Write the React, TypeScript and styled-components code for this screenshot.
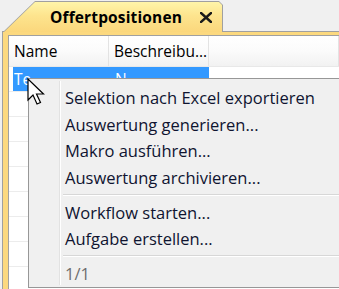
import React from "react";
import styled, { createGlobalStyle } from "styled-components";

const Global = createGlobalStyle`
  html, body { margin: 0; padding: 0; background: #f0f0f0; }
  body { font-family: "Open Sans", "Noto Sans", sans-serif; }
`;

const Screen = styled.div`
  position: relative;
  width: 339px;
  height: 289px;
  overflow: hidden;
  background: #f0f0f0;
  padding-left: 2px;
  box-sizing: border-box;
`;

const TabStrip = styled.div`
  height: 32px;
  display: flex;
  align-items: flex-end;
  padding-left: 1px;
  position: relative;
  z-index: 1;
  margin-bottom: -1px;
`;

const Tab = styled.div`
  width: 220px;
  height: 31px;
  background: #a0a0a0;
  padding: 1px 1px 0 1px;
  box-sizing: border-box;
  clip-path: polygon(0 100%, 32px 0, calc(100% - 4px) 0, 100% 4px, 100% 100%);
  display: flex;
`;

const TabFace = styled.div`
  flex: 1;
  background: linear-gradient(#fff5a9, #fde48e 45%, #fbd77c);
  clip-path: polygon(0 100%, 31px 0, calc(100% - 3px) 0, 100% 3px, 100% 100%);
  display: flex;
  align-items: center;
  padding-left: 46px;
  gap: 18px;
`;

const TabTitle = styled.span`
  font-weight: 700;
  font-size: 15.5px;
  color: #000;
  letter-spacing: 0.15px;
`;

const Panel = styled.div`
  border-top: 1px solid #a0a0a0;
  border-left: 1px solid #a0a0a0;
  background: #fcd97f;
  padding: 3px 0 0 5px;
  height: 260px;
  box-sizing: border-box;
`;

const Grid = styled.div`
  background: #fff;
  border-top: 1px solid #a0a0a0;
  border-left: 1px solid #a0a0a0;
  height: 100%;
  font-size: 15.5px;
  color: #000;
`;

const HeaderRow = styled.div`
  display: flex;
  height: 30px;
  background: linear-gradient(#ffffff, #fbfbfb 50%, #f2f2f2);
  border-bottom: 1px solid #e8e8e8;
`;

const HeaderCell = styled.div<{ $w?: number }>`
  width: ${(p) => (p.$w ? `${p.$w}px` : "auto")};
  flex: ${(p) => (p.$w ? "none" : "1")};
  box-sizing: border-box;
  border-right: 1px solid #e3e3e3;
  padding-left: 5px;
  display: flex;
  align-items: center;
  white-space: nowrap;
`;

const Row = styled.div`
  display: flex;
  height: 25px;
  border-bottom: 1px solid #ececec;
  box-sizing: border-box;
  padding-left: 4px;
`;

const Cell = styled.div<{ $w: number; $selected?: boolean; $pad?: number }>`
  width: ${(p) => p.$w}px;
  background: ${(p) => (p.$selected ? "#3399ff" : "transparent")};
  color: ${(p) => (p.$selected ? "#fff" : "#000")};
  display: flex;
  align-items: flex-start;
  padding-top: 1px;
  padding-left: ${(p) => p.$pad ?? 1}px;
  box-sizing: border-box;
`;

const Menu = styled.div`
  position: absolute;
  left: 28px;
  top: 78px;
  width: 330px;
  height: 210px;
  box-sizing: border-box;
  background: #f0f0f0;
  border: 1px solid #979797;
  padding: 5px 2px 0 2px;
  display: flex;
  flex-direction: column;
  font-size: 16.5px;
  color: #0f1430;
  &::before {
    content: "";
    position: absolute;
    left: 30px;
    top: 2px;
    bottom: 2px;
    width: 1px;
    background: #e2e2e2;
    border-right: 1px solid #fff;
  }
`;

const MenuItem = styled.div<{ $disabled?: boolean }>`
  height: 26.7px;
  display: flex;
  align-items: center;
  padding-left: 34px;
  white-space: nowrap;
  color: ${(p) => (p.$disabled ? "#6d6d6d" : "inherit")};
`;

const Separator = styled.div`
  height: 1px;
  margin: 3px 0 3px 32px;
  background: #d7d7d7;
  border-bottom: 1px solid #fff;
`;

const Cursor = styled.svg`
  position: absolute;
  left: 27px;
  top: 78px;
`;

function CloseIcon() {
  return (
    <svg width="12" height="11" viewBox="0 0 12 11">
      <path d="M1 1 L11 10 M11 1 L1 10" stroke="#1a1a1a" strokeWidth="2.4" strokeLinecap="square" />
    </svg>
  );
}

export default function App() {
  const rows = Array.from({ length: 9 });
  return (
    <>
      <Global />
      <Screen>
        <TabStrip>
          <Tab>
            <TabFace>
              <TabTitle>Offertpositionen</TabTitle>
              <CloseIcon />
            </TabFace>
          </Tab>
        </TabStrip>
        <Panel>
          <Grid>
            <HeaderRow>
              <HeaderCell $w={100}>Name</HeaderCell>
              <HeaderCell $w={100}>Beschreibu…</HeaderCell>
              <HeaderCell />
            </HeaderRow>
            {rows.map((_, i) => (
              <Row key={i}>
                <Cell $w={96} $selected={i === 0}>{i === 0 ? "Te" : ""}</Cell>
                <Cell $w={100} $selected={i === 0} $pad={6}>
                  {i === 0 ? "N" : ""}
                </Cell>
              </Row>
            ))}
          </Grid>
        </Panel>
        <Menu>
          <MenuItem>Selektion nach Excel exportieren</MenuItem>
          <MenuItem>Auswertung generieren...</MenuItem>
          <MenuItem>Makro ausführen...</MenuItem>
          <MenuItem>Auswertung archivieren...</MenuItem>
          <Separator />
          <MenuItem>Workflow starten...</MenuItem>
          <MenuItem>Aufgabe erstellen...</MenuItem>
          <Separator />
          <MenuItem $disabled>1/1</MenuItem>
        </Menu>
        <Cursor width="20" height="28" viewBox="0 0 20 28">
          <path
            d="M1 1 L1 22 L6 17 L10 26 L13.5 24.5 L9.5 16 L16.5 16 Z"
            fill="#fff"
            stroke="#000"
            strokeWidth="1.2"
            strokeLinejoin="miter"
          />
        </Cursor>
      </Screen>
    </>
  );
}
